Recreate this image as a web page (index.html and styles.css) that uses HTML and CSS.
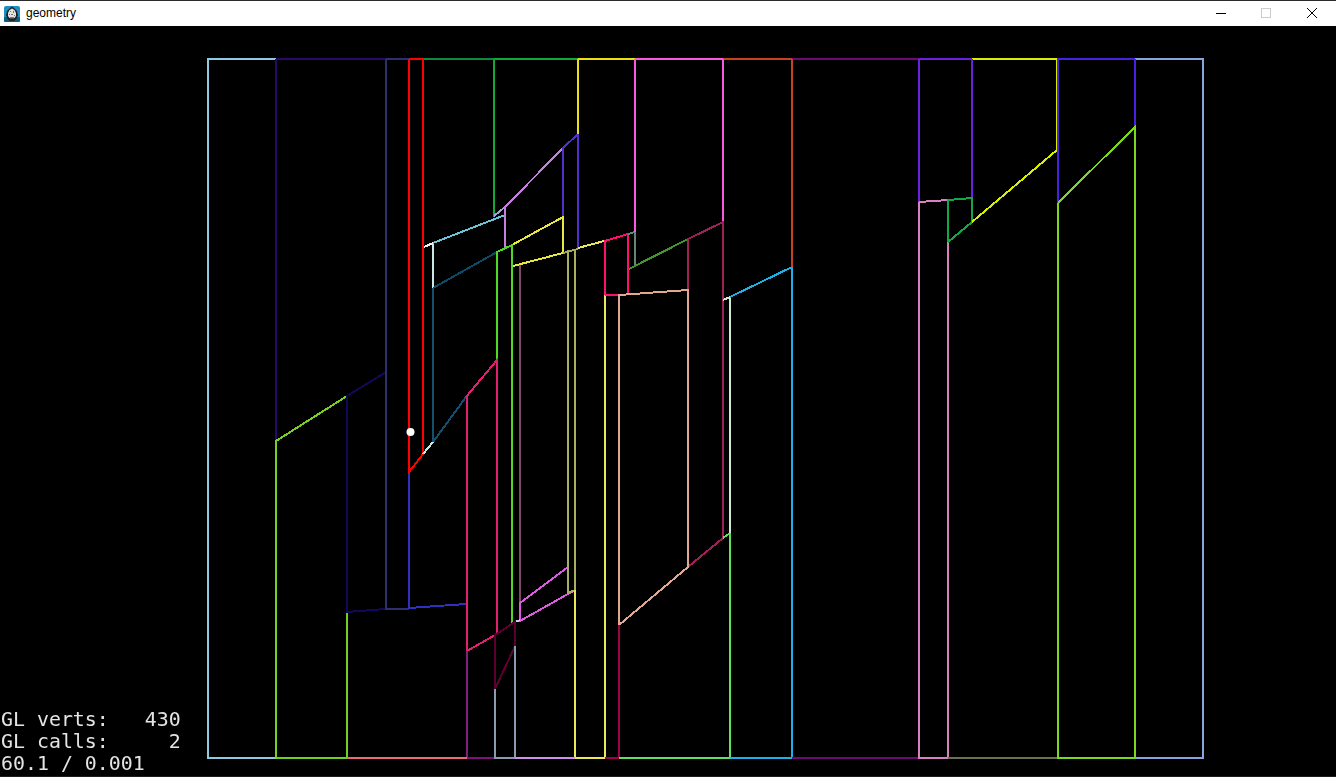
FILE: index.html
```html
<!DOCTYPE html>
<html lang="en">
<head>
    <meta charset="UTF-8">
    <title>geometry</title>
    <link rel="stylesheet" href="styles.css">
</head>
<body>
    <div class="window">
        <div class="titlebar">
            <svg class="app-icon" width="16" height="16" viewBox="0 0 16 16">
                <rect width="16" height="16" rx="2" fill="#1d8fc0"/>
                <rect y="11" width="16" height="5" rx="1" fill="#0b5f8a"/>
                <path d="M8 0.500 L10 2 L13 5 L14 9 L12.500 13 L10 15 L6 15 L3.500 13 L2 9 L3 5 L6 2 Z" fill="#222"/>
                <path d="M8 2.500 L10.500 4 L12 7 L12 10 L10.500 12 L5.500 12 L4 10 L4 7 L5.500 4 Z" fill="#e4e4e4"/>
                <path d="M6 5 h1 v1 h-1 Z M9 5 h1 v2 h-1 Z M5 8 h1 v1 h-1 Z M10 9 h1 v1 h-1 Z M7 8 h2 v1 h-2 Z M6 11 h4 v1.500 h-4 Z" fill="#777"/>
            </svg>
            <span class="title">geometry</span>
            <div class="controls">
                <svg class="control" width="46" height="25" viewBox="0 0 46 25">
                    <path d="M18 12.500 H28" stroke="#000" fill="none"/>
                </svg>
                <svg class="control" width="46" height="25" viewBox="0 0 46 25">
                    <rect x="17.500" y="7.500" width="9" height="9" stroke="#ccc" fill="none"/>
                </svg>
                <svg class="control" width="46" height="25" viewBox="0 0 46 25">
                    <path d="M17 7 L27 17 M27 7 L17 17" stroke="#000" fill="none"/>
                </svg>
            </div>
        </div>
        <div class="viewport">
            <svg class="scene" width="1336" height="751" viewBox="0 26 1336 751">
                <!-- outer frame -->
                <path d="M276 758 H208 V59 H276" stroke="#8ecae0"/>
                <path d="M1135 59 H1203 V758 H1135" stroke="#8aa4e0"/>
                <path d="M276 59 H386" stroke="#250a6a"/>
                <path d="M386 59 H409" stroke="#2d2f6e"/>
                <path d="M409 59 H423" stroke="#ff0000"/>
                <path d="M423 59 H494" stroke="#0b8a3f"/>
                <path d="M494 59 H578" stroke="#12a838"/>
                <path d="M578 59 H635" stroke="#e8e010"/>
                <path d="M635 59 H723" stroke="#f55ae0"/>
                <path d="M723 59 H792" stroke="#c8401e"/>
                <path d="M792 59 H919" stroke="#6e0a78"/>
                <path d="M919 59 H972" stroke="#6a20e0"/>
                <path d="M972 59 H1057" stroke="#d8f000"/>
                <path d="M1057 59 H1135" stroke="#4a20e0"/>

                <!-- left block -->
                <path d="M276 59 V441" stroke="#250a6a"/>
                <path d="M276 758 V441 L347 396" stroke="#7ad020"/>
                <path d="M276 758 H347 V612" stroke="#70d020"/>
                <path d="M386 372 L347 396 V612 L386 609" stroke="#12085a"/>
                <path d="M386 59 V609 H409" stroke="#2d2f6e"/>
                <path d="M409 472 V608 L466 604" stroke="#3030c0"/>
                <path d="M409 59 V472 L423 454 V59" stroke="#ff0000"/>
                <path d="M423 454 L433 442" stroke="#c8e8e8"/>
                <path d="M433 442 L466 397" stroke="#14506e"/>
                <path d="M433 288 V442" stroke="#14506e"/>
                <path d="M433 244 V288" stroke="#c8e8e8"/>
                <path d="M424 247 L433 243" stroke="#f0f0f0"/>
                <path d="M433 243 L505 215" stroke="#6cc4d8"/>
                <path d="M433 288 L497 252" stroke="#0e4a66"/>

                <!-- centre block -->
                <path d="M494 59 V217" stroke="#12a838"/>
                <path d="M494 216 L505 207" stroke="#a0a0e0"/>
                <path d="M505 248 V207 L563 148" stroke="#c480e0"/>
                <path d="M563 217 V148 L578 134 V248" stroke="#5030c8"/>
                <path d="M578 59 V134" stroke="#e8e010"/>
                <path d="M512 245 L563 217 V252" stroke="#e8e840"/>
                <path d="M497 360 V252 L512 245 V624" stroke="#50d828"/>
                <path d="M513 266 L563 253" stroke="#e8e840"/>
                <path d="M563 253 L578 249" stroke="#a8a860"/>
                <path d="M578 248 L604 241" stroke="#e8e860"/>
                <path d="M520 265 V603" stroke="#804868"/>
                <path d="M568 567 L520 603 V621 L575 590" stroke="#dc5ce0"/>
                <path d="M515 622 L520 620" stroke="#e0c0f0"/>
                <path d="M568 250 V593 L575 590 V249" stroke="#a8b060"/>
                <path d="M575 590 V758 H605 V295" stroke="#e8e858"/>
                <path d="M466 397 L497 360 V634 M467 397 V651 L495 635" stroke="#e02070"/>
                <path d="M467 651 V758" stroke="#80207e"/>
                <path d="M467 758 H495" stroke="#80107e"/>
                <path d="M347 758 H467" stroke="#f06878"/>
                <path d="M495 635 L515 622 V646 L495 689 Z" stroke="#5c0030"/>
                <path d="M495 689 V758 H515 V646" stroke="#8a9ab0"/>
                <path d="M515 758 H575" stroke="#d090f0"/>

                <!-- right of centre -->
                <path d="M605 295 V241 L628 234 V294 M605 295 H619" stroke="#ff1070"/>
                <path d="M628 234 L635 232 V266" stroke="#608878"/>
                <path d="M635 59 V232" stroke="#f55ae0"/>
                <path d="M629 269 L688 239" stroke="#409828"/>
                <path d="M723 59 V222" stroke="#f55ae0"/>
                <path d="M688 290 V239 L723 222 V538 L688 567" stroke="#a02058"/>
                <path d="M619 625 V295 L688 290 V567 L619 625" stroke="#e0a890"/>
                <path d="M619 625 V758 H605" stroke="#a00048"/>
                <path d="M723 538 L730 533 V758 H619" stroke="#60e060"/>
                <path d="M723 300 L730 297 V533" stroke="#d0e8d0"/>
                <path d="M730 297 L792 267 V758 H730" stroke="#20b0e8"/>
                <path d="M792 59 V267" stroke="#c8401e"/>
                <path d="M792 758 H919" stroke="#6e0a78"/>

                <!-- right block -->
                <path d="M919 202 V59 M972 59 V198" stroke="#6a20e0"/>
                <path d="M948 758 V242 M919 202 V758 H948 M919 202 L948 200" stroke="#d880c0"/>
                <path d="M948 242 V200 L972 198 V222 L948 242" stroke="#10a848"/>
                <path d="M972 222 L1057 150 V59" stroke="#d8f000"/>
                <path d="M948 758 H1058" stroke="#6a7050"/>
                <path d="M1058 59 V203 M1135 59 V127" stroke="#4a20e0"/>
                <path d="M1058 203 V758 H1135 V127 L1058 203" stroke="#7ad820"/>
                <circle class="marker" cx="410.500" cy="432" r="4"/>
            </svg>
            <pre class="stats">GL verts:   430
GL calls:     2
60.1 / 0.001</pre>
        </div>
    </div>
</body>
</html>
```
FILE: styles.css
```css
/* General Styles */
html, body {
    margin: 0;
    padding: 0;
    height: 100%;
    background: #000;
    overflow: hidden;
}

.window {
    display: flex;
    flex-direction: column;
    box-sizing: border-box;
    width: 1336px;
    height: 777px;
    border-bottom: 1px solid #1c1c1c;
}

/* Title bar */
.titlebar {
    display: flex;
    align-items: center;
    flex: none;
    height: 25px;
    border-top: 1px solid #2b2b2b;
    background: #fff;
    font-family: "Liberation Sans", sans-serif;
    font-size: 12px;
    color: #000;
}

.app-icon {
    margin: 0 6px 0 4px;
}

.title {
    padding-bottom: 2px;
}

.controls {
    display: flex;
    margin-left: auto;
}

.control {
    display: block;
}

/* GL viewport */
.viewport {
    position: relative;
    flex: 1;
    overflow: hidden;
    background: #000;
}

.scene {
    display: block;
}

.scene path {
    fill: none;
    stroke-width: 2;
    shape-rendering: crispEdges;
}

.marker {
    fill: #fff;
}

.stats {
    position: absolute;
    left: 1px;
    bottom: 1px;
    margin: 0;
    font-family: "DejaVu Sans Mono", monospace;
    font-size: 19.900px;
    line-height: 22px;
    color: #e4e4e4;
    filter: blur(0.3px);
}
```
